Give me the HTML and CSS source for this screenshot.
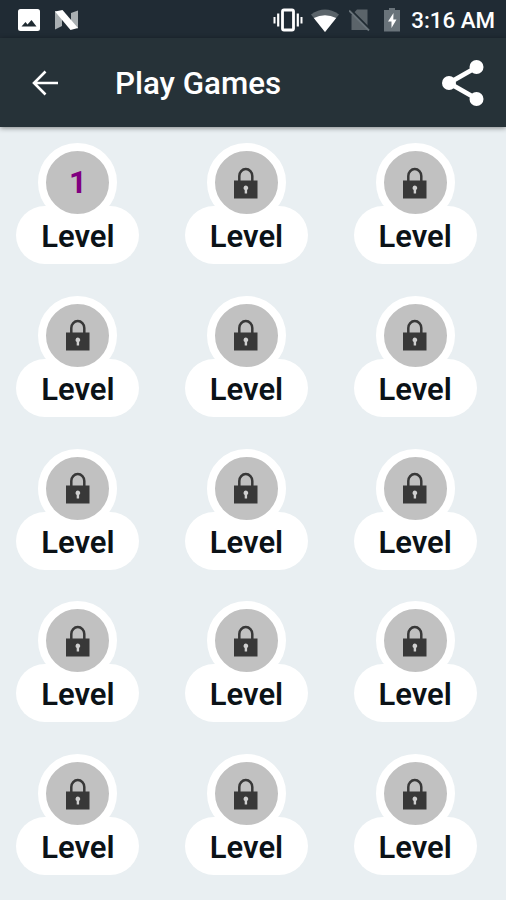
FILE: index.html
```html
<!DOCTYPE html>
<html>
  <head>
    <meta charset="utf-8">
    <title>Play Games</title>
    <link rel="stylesheet" href="styles.css">
  </head>
  <body>
    <div class="status-bar">
      <div class="status-left">
        <svg width="22" height="22" viewBox="0 0 22 22">
          <rect width="22" height="22" rx="2.5" fill="#fff"/>
          <path d="M3.5 17.5l4-4.5 2 2.5 4-4.5 5 6.5z" fill="#202b32"/>
        </svg>
        <svg width="25" height="20" viewBox="0 0 25 20">
          <path d="M1 1l7 3v12l-7 3.5zM17 3l7-2.5v18l-7-3z" fill="#a9afb2"/>
          <path d="M1 1.5L8.5 0 24 18l-7.5 2z" fill="#fff"/>
        </svg>
      </div>
      <div class="status-right">
        <svg width="30" height="24" viewBox="0 0 30 24">
          <rect x="9.5" y="2" width="11" height="20" rx="1.5" fill="none" stroke="#fff" stroke-width="2.8"/>
          <path d="M5.2 5.5v13M24.8 5.5v13" stroke="#fff" stroke-width="2.2"/>
          <path d="M1.5 9v6.5M28.5 9v6.5" stroke="#fff" stroke-width="2"/>
        </svg>
        <svg class="wifi" width="28" height="23" viewBox="0 0 28 23">
          <path d="M0 5.5Q14-4.5 28 5.5L14 23z" fill="#5b646a"/>
          <path d="M2.8 9Q14 3.5 25.2 9L14 23z" fill="#fff"/>
        </svg>
        <svg class="no-sim" width="21" height="24" viewBox="0 0 21 24">
          <path d="M8 1.5h10.500V22H2.500V7.500z" fill="#5b646a"/>
          <path d="M1 1.5l20 20" stroke="#202b32" stroke-width="2.5"/>
          <path d="M0 2.500l20 20" stroke="#69737a" stroke-width="1.8"/>
        </svg>
        <svg class="battery" width="16" height="24" viewBox="0 0 16 24">
          <path d="M5 0h6v2h5v21.5H0V2h5z" fill="#69737a"/>
          <path d="M9.5 5L4 13.5h3.5V20l5-8.5H9.3z" fill="#fff"/>
        </svg>
        <span class="time">3:16 AM</span>
      </div>
    </div>

    <div class="toolbar">
      <svg class="back" width="28" height="26" viewBox="0 0 28 26">
        <path d="M14.5 1.5L3 13l11.5 11.5M3 13h24" fill="none" stroke="#fff" stroke-width="2.6"/>
      </svg>
      <h1>Play Games</h1>
      <svg class="share" width="42" height="46" viewBox="0 0 42 46">
        <path d="M35 7L7 23l28 16" fill="none" stroke="#fff" stroke-width="4.8"/>
        <circle cx="34.5" cy="7" r="7" fill="#fff"/>
        <circle cx="7" cy="23" r="7" fill="#fff"/>
        <circle cx="34.5" cy="39" r="7" fill="#fff"/>
      </svg>
    </div>

    <div class="levels" id="levels"></div>

    <script>
      const levels = document.getElementById("levels");

      const lock = `
        <svg width="24" height="32" viewBox="0 0 24 32">
          <path d="M5.3 14V9a6.5 7 0 0 1 13 0v5" fill="none" stroke="#383838" stroke-width="2.5"/>
          <rect x="0" y="13.5" width="23.5" height="18" fill="#383838"/>
          <path d="M11.7 18.5a2.5 2.5 0 0 1 1.4 4.6v3.4h-2.4v-3.4a2.5 2.5 0 0 1 1-4.6z" fill="#cfcfcf"/>
        </svg>`;

      // Only the first level is open at the start
      for (let i = 1; i <= 15; i++) {
        const level = document.createElement("div");
        level.className = "level";
        level.innerHTML = `
          <div class="circle">${i === 1 ? i : lock}</div>
          <div class="label">Level</div>`;
        levels.appendChild(level);
      }
    </script>
  </body>
</html>
```
FILE: styles.css
```css
body {
  margin: 0;
  height: 900px;
  overflow: hidden;
  background-color: #e9eff2;
  font-family: Roboto, sans-serif;
}

svg {
  display: block;
  flex: none;
}

.status-bar {
  display: flex;
  justify-content: space-between;
  align-items: center;
  box-sizing: border-box;
  height: 38px;
  padding: 2px 11px 0 18px;
  background-color: #202b34;
}

.status-left,
.status-right {
  display: flex;
  align-items: center;
}

.status-left {
  gap: 14px;
}

.wifi {
  margin-left: 8px;
}

.no-sim {
  margin-left: 10px;
}

.battery {
  margin-left: 14px;
}

.time {
  margin-left: 11px;
  color: #fff;
  font-size: 22.3px;
  font-weight: 500;
  white-space: nowrap;
}

.toolbar {
  display: flex;
  align-items: center;
  box-sizing: border-box;
  height: 89px;
  padding: 0 22px 0 31px;
  background-color: #263238;
  box-shadow: 0 1px 5px rgba(0, 0, 0, 0.45);
}

.toolbar h1 {
  flex: 1;
  margin: 2px 0 0 56px;
  color: #fff;
  font-size: 31.3px;
  font-weight: 500;
}

.levels {
  display: grid;
  grid-template-columns: repeat(3, 123px);
  grid-auto-rows: 121px;
  column-gap: 45.7px;
  row-gap: 31.8px;
  padding: 16px 0 0 16.3px;
}

.level {
  display: flex;
  flex-direction: column;
  align-items: center;
}

.circle {
  display: flex;
  justify-content: center;
  align-items: center;
  z-index: 1;
  flex: none;
  width: 63px;
  height: 63px;
  border: 8px solid #fff;
  border-radius: 50%;
  background-color: #c1c1c1;
  color: #800080;
  font-size: 31px;
  font-weight: bold;
  line-height: 35px;
}

.label {
  width: 123px;
  height: 58px;
  margin-top: -16px;
  border-radius: 29px;
  background-color: #fff;
  color: #0b1217;
  font-size: 31px;
  font-weight: 600;
  line-height: 62px;
  text-align: center;
}
```
